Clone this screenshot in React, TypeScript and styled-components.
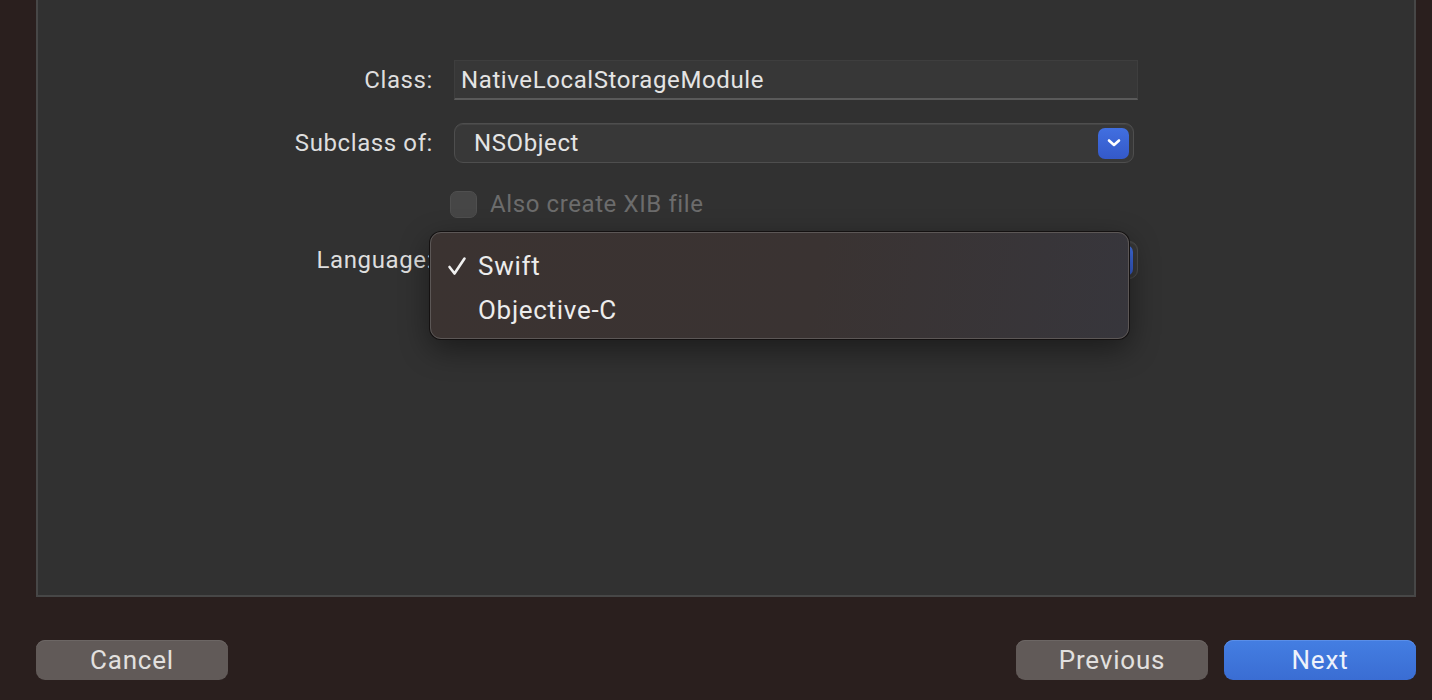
import React from 'react';
import styled, { createGlobalStyle } from 'styled-components';

const GlobalStyle = createGlobalStyle`
  html, body {
    margin: 0;
    padding: 0;
    background: #2a1f1e;
  }
  body {
    font-family: Roboto, 'Liberation Sans', sans-serif;
    -webkit-font-smoothing: antialiased;
  }
`;

const Page = styled.div`
  width: 1432px;
  height: 700px;
  box-sizing: border-box;
  padding: 0 16px 0 36px;
  background: #2a1f1e;
  overflow: hidden;
`;

const Panel = styled.section`
  height: 597px;
  box-sizing: border-box;
  border: 2px solid #474747;
  border-top: none;
  background: #313131;
  padding-top: 60px;
`;

const Row = styled.div<{ $h: number; $mt?: number }>`
  display: grid;
  grid-template-columns: 395px 684px;
  column-gap: 21px;
  align-items: center;
  height: ${(p) => p.$h}px;
  margin-top: ${(p) => p.$mt ?? 0}px;
  font-size: 24px;
  letter-spacing: 0.6px;
`;

const Label = styled.label`
  text-align: right;
  color: #dedede;
`;

const Control = styled.div`
  position: relative;
  height: 100%;
  display: flex;
  align-items: center;
`;

const TextField = styled.div`
  width: 100%;
  height: 100%;
  box-sizing: border-box;
  background: #373737;
  border: 1px solid #3e3e3e;
  border-bottom: 2px solid #5a5a5a;
  padding-left: 6px;
  display: flex;
  align-items: center;
  color: #e4e4e4;
`;

const Popup = styled.div<{ $w: number }>`
  width: ${(p) => p.$w}px;
  height: 100%;
  box-sizing: border-box;
  background: #383838;
  border: 1px solid #4e4e4e;
  border-radius: 9px;
  box-shadow: inset 0 1px 0 #444;
  padding: 0 4px 0 19px;
  display: flex;
  align-items: center;
  justify-content: space-between;
  color: #e4e4e4;
`;

const Stepper = styled.div`
  width: 31px;
  height: 31px;
  border-radius: 7px;
  background: linear-gradient(#416fe0, #3459c9);
  display: flex;
  align-items: center;
  justify-content: center;
`;

const Checkbox = styled.div`
  width: 27px;
  height: 27px;
  box-sizing: border-box;
  margin-left: -4px;
  border-radius: 7px;
  background: #464646;
  border: 1px solid #4f4f4f;
`;

const CheckLabel = styled.span`
  margin-left: 13px;
  color: #6c6c6c;
`;

const Menu = styled.div`
  position: absolute;
  left: -24px;
  top: -9px;
  width: 699px;
  height: 107px;
  box-sizing: border-box;
  padding-top: 11px;
  border-radius: 11px;
  background: linear-gradient(100deg, #3b3331 0%, #3a3332 55%, #37363c 100%);
  border: 1px solid #5c5756;
  box-shadow: 0 0 0 1px #141111, 0 10px 30px rgba(0, 0, 0, 0.45);
  z-index: 2;
`;

const MenuItem = styled.div`
  height: 44px;
  display: flex;
  align-items: center;
  color: #ececec;
  font-size: 26px;
  letter-spacing: 0.7px;
`;

const Check = styled.span`
  width: 47px;
  padding-left: 16px;
  box-sizing: border-box;
  display: flex;
  align-items: center;
`;

const Footer = styled.footer`
  display: flex;
  justify-content: space-between;
  padding-top: 43px;
`;

const Group = styled.div`
  display: flex;
  gap: 16px;
`;

const Button = styled.button<{ $primary?: boolean }>`
  width: 192px;
  height: 40px;
  border: none;
  border-radius: 9px;
  font-family: Roboto, 'Liberation Sans', sans-serif;
  font-size: 26px;
  letter-spacing: 0.8px;
  color: ${(p) => (p.$primary ? '#eef2fb' : '#e2e0df')};
  background: ${(p) =>
    p.$primary ? 'linear-gradient(#447ee2, #3a6dd3)' : '#615a58'};
  box-shadow: inset 0 1px 0 ${(p) => (p.$primary ? '#5a8ee8' : '#6c6664')};
  padding: 0;
`;

const Chevron = () => (
  <svg width="16" height="10" viewBox="0 0 16 10">
    <path d="M3 2.5 L8 7 L13 2.5" fill="none" stroke="#fff" strokeWidth="2.6" strokeLinecap="round" strokeLinejoin="round" />
  </svg>
);

const Tick = () => (
  <svg width="20" height="20" viewBox="0 0 20 20">
    <path d="M2.5 11 L7.5 17.5 L17.5 2.5" fill="none" stroke="#f0f0f0" strokeWidth="2.6" strokeLinecap="round" strokeLinejoin="round" />
  </svg>
);

export default function App() {
  return (
    <>
      <GlobalStyle />
      <Page>
        <Panel>
          <Row $h={40}>
            <Label>Class:</Label>
            <Control>
              <TextField>NativeLocalStorageModule</TextField>
            </Control>
          </Row>
          <Row $h={40} $mt={23}>
            <Label>Subclass of:</Label>
            <Control>
              <Popup $w={680}>
                NSObject
                <Stepper>
                  <Chevron />
                </Stepper>
              </Popup>
            </Control>
          </Row>
          <Row $h={40} $mt={21}>
            <span />
            <Control>
              <Checkbox />
              <CheckLabel>Also create XIB file</CheckLabel>
            </Control>
          </Row>
          <Row $h={38} $mt={17}>
            <Label>Language:</Label>
            <Control>
              <Popup $w={684}>
                <span />
                <Stepper>
                  <Chevron />
                </Stepper>
              </Popup>
              <Menu>
                <MenuItem>
                  <Check>
                    <Tick />
                  </Check>
                  Swift
                </MenuItem>
                <MenuItem>
                  <Check />
                  Objective-C
                </MenuItem>
              </Menu>
            </Control>
          </Row>
        </Panel>
        <Footer>
          <Button>Cancel</Button>
          <Group>
            <Button>Previous</Button>
            <Button $primary>Next</Button>
          </Group>
        </Footer>
      </Page>
    </>
  );
}
